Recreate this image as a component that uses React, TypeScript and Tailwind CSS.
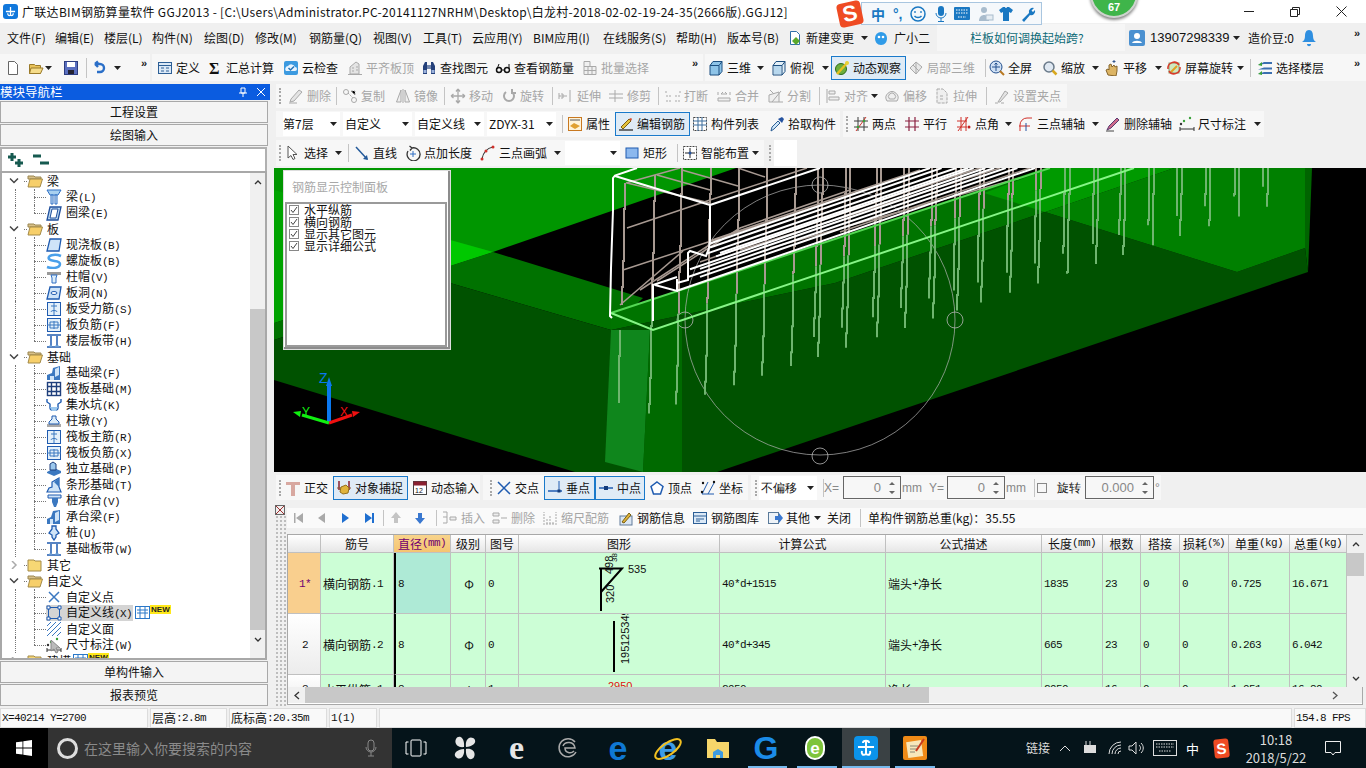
import type { ReactNode } from "react"

const GR = "#a9a9a9"
const BL = "#2f6fc4"

// 16x16 toolbar and tree icons
const icons: Record<string, ReactNode> = {
  doc: <path d="M3.5 1.5h6l3 3v10h-9z" fill="#fff" stroke="#666" />,
  newdoc: <><path d="M3.5 1.5h6l3 3v10h-9z" fill="#fff" stroke="#2f6fa8" /><path d="M9 7l4 4-4 4-4-4z" fill="#5aa82a" /></>,
  open: <><path d="M1.5 4.5h5l1 1h5v8h-11z" fill="#e8c25a" stroke="#9a7a2a" /><path d="M3 8h12l-2.5 5.5H1.5z" fill="#f5dc8a" stroke="#9a7a2a" /></>,
  save: <><rect x="1.5" y="1.5" width="13" height="13" fill="#5a6fc0" stroke="#2d3d80" /><rect x="4" y="2" width="8" height="5" fill="#fff" /><rect x="5" y="10" width="6" height="4" fill="#223" /></>,
  undo: <path d="M4 4h5a4 4 0 0 1 0 8H6M4 4l3-2.5M4 4l3 3" fill="none" stroke="#2b6fc8" strokeWidth="2.4" />,
  define: <><rect x="1.5" y="2.5" width="13" height="11" fill="#dbe9f7" stroke="#2d5f96" /><path d="M1.5 5.5h13M4 8h3M4 11h3M9 8h3M9 11h3" stroke="#2d5f96" /></>,
  sigma: <text x="2" y="14" fontSize="16" fontWeight="700" fontFamily="Liberation Serif" fill="#111">Σ</text>,
  cloud: <><rect x="1" y="1" width="14" height="14" rx="2" fill="#3c9ae0" /><path d="M3 11a3 3 0 0 1 2-5 4 4 0 0 1 7 1 2 2 0 0 1 0 4z" fill="#e8f4ff" /><path d="M5.5 8l2 2 3.5-3.5" fill="none" stroke="#2474b8" strokeWidth="1.5" /></>,
  flat: <path d="M3 14V7l6-5 3 2v10zM5 8h2M5 11h2M9 7h2M9 10h2M1 14.500h14" fill="#e4e4e4" stroke={GR} />,
  binoc: <><path d="M2 14V6l2-4h2v12zM10 14V2h2l2 4v8z" fill="#24407a" /><rect x="6" y="5" width="4" height="4" fill="#7487ad" /><rect x="2.500" y="10" width="3" height="3" fill="#9cb2dc" /><rect x="10.500" y="10" width="3" height="3" fill="#9cb2dc" /></>,
  glasses: <><circle cx="4" cy="10" r="2.500" fill="none" stroke="#111" strokeWidth="1.500" /><circle cx="12" cy="10" r="2.500" fill="none" stroke="#111" strokeWidth="1.500" /><path d="M2 9l2-5M14 9V4M6.500 10h3" stroke="#111" /></>,
  batch: <path d="M2 1.500h6v5H2zM2 6.500v8h12v-8H2zM6 6.500v8M10 6.500v8M2 10.500h12" fill="#f0f0f0" stroke={GR} />,
  cube: <><path d="M2 5.500l3-4h9v10l-3 3.500H2z" fill="#8ec4e8" stroke="#1d4f80" /><path d="M2 5.500h9v9.500M11 5.500l3-4" fill="none" stroke="#1d4f80" /></>,
  cubeTop: <><path d="M2 5.500l3-4h9v10l-3 3.500H2z" fill="#e4f0f8" stroke="#1d4f80" /><path d="M2 5.500h9v9.500M11 5.500l3-4" fill="none" stroke="#1d4f80" /><path d="M3 6h7v8H3z" fill="#b8d8ee" /></>,
  orbit: <><circle cx="7" cy="9" r="5.500" fill="#6cae3c" stroke="#2d6b1c" /><path d="M3 14L14 2" stroke="#e4c020" strokeWidth="2.500" /><circle cx="13" cy="3" r="2" fill="#e8d23c" /></>,
  local3d: <><path d="M2 8l6-6 6 5-6 7z" fill="#e8e8e8" stroke={GR} /><path d="M5 5l6 6M8 2v12" stroke={GR} /></>,
  full: <><circle cx="7" cy="7" r="6" fill="#cfe0f4" stroke="#24508e" /><path d="M7 3v8M3 7h8M7 3l-1.500 1.500M7 3l1.500 1.500" stroke="#24508e" /><path d="M11 11l4 4" stroke="#b87820" strokeWidth="2" /></>,
  zoom: <><circle cx="7" cy="7" r="5" fill="#dfe8f2" stroke="#6a7a8a" strokeWidth="1.500" /><path d="M10.500 10.500l4 4" stroke="#d8a820" strokeWidth="2.500" /></>,
  pan: <><path d="M4 15l-2-5 2-1 1 1V5l2-1 1 3 2-2 1 2 2-1v5l-1 5z" fill="#dcb464" stroke="#85642a" /><path d="M10 3V0M8.500 1.500h3" stroke="#34568c" /></>,
  rot: <><rect x="3" y="3" width="10" height="10" fill="#cfe8c0" stroke="#8aa070" /><path d="M5 12l6-6" stroke="#e0a020" strokeWidth="2" /><path d="M2 9a6 6 0 0 1 11-4M14 7a6 6 0 0 1-11 4" fill="none" stroke="#d83a2a" strokeWidth="1.500" /></>,
  floors: <><path d="M1 5l6-3h8v2H7zM1 9.500l6-2h8v2H1zM1 14l6-2h8v2H1z" fill="#3b6fb0" /><path d="M1 5l4-3v4zM1 14l4-3v4z" fill="#3aa03a" /></>,
  del: <><path d="M2 14l1-3 8-9 3 2-8 9z" fill="#e4e4e4" stroke={GR} /><path d="M1 15h8" stroke={GR} /></>,
  copy: <><circle cx="4" cy="4" r="2.500" fill="none" stroke={GR} /><circle cx="12" cy="12" r="2.500" fill="none" stroke={GR} /><path d="M6 5l5 5M9 3h4v4" stroke={GR} strokeDasharray="2 1" /></>,
  mirror: <path d="M6 2L1.500 14H6zM10 2l4.500 12H10zM8 1v14" fill="#efefef" stroke={GR} />,
  move: <path d="M8 1v14M1 8h14M8 1L6 3.500M8 1l2 2.500M8 15l-2-2.500M8 15l2-2.500M1 8l2.500-2M1 8l2.500 2M15 8l-2.500-2M15 8l-2.500 2" fill="none" stroke={GR} strokeWidth="1.300" />,
  rotcw: <path d="M5 4a5 5 0 1 0 6 0M11 1v4h4" fill="none" stroke={GR} strokeWidth="2" />,
  extend: <path d="M1 8h8M12 2v12M1 5v6M3 6h2v4H3" fill="none" stroke={GR} />,
  trim: <path d="M1 6h14M1 10h14M7 2v12" fill="none" stroke={GR} />,
  brk: <path d="M1 8h5M10 8h5M1 3v3M15 3v3M1 13h5M10 13h5" fill="none" stroke={GR} strokeDasharray="2 1" />,
  merge: <path d="M2 13h12v-3H2zM2 4v3M14 4v3M5 6h6M5 6l2-2M11 6L9 4" fill="#efefef" stroke={GR} />,
  split: <path d="M1 14h14M1 14V7l10-3v10M4 14l9-11M2 2l4 4" fill="#efefef" stroke={GR} />,
  align: <path d="M2 1v14M4 3h6v3H4zM4 9h10v3H4z" fill="#efefef" stroke={GR} />,
  offset: <path d="M3 13a6 6 0 1 1 10 0zM5.500 11a3.500 3.500 0 1 1 5 0z" fill="#efefef" stroke={GR} />,
  stretch: <path d="M3 1h6l4 4v10H3zM6 8h4M6 11h4" fill="#efefef" stroke={GR} strokeDasharray="3 1" />,
  grips: <><path d="M4 14l7-11 3 2-8 9z" fill="#e4e4e4" stroke={GR} /><path d="M1 15h3M7 15h3" stroke={GR} /></>,
  attr: <><rect x="1.500" y="1.500" width="13" height="13" fill="#fff3d8" stroke="#c87820" /><path d="M3 10l4-3 6 3-5 3z" fill="#e0a030" /><path d="M3 4h10" stroke="#555" /></>,
  edit: <><path d="M1 14h14" stroke="#444" strokeWidth="1.500" /><path d="M3 11l8-8 2 2-8 8z" fill="#e4c23c" stroke="#7a5f10" /><path d="M11 3l2-1 1 1-1 2z" fill="#d84a2a" /></>,
  list: <><rect x="1.500" y="1.500" width="13" height="13" fill="#fff" stroke="#444" strokeDasharray="2 1" /><path d="M6 1v14M10 1v14M1 5h14M1 9h14" stroke="#3d6e9e" /></>,
  pick: <><path d="M2 15l1-4 6-6 2 2-6 6z" fill="#cfe6f8" stroke="#2d5f96" /><path d="M9 3l4 4 2-4-2-2z" fill="#2553a0" /></>,
  two: <><path d="M1 5h14M1 11h14M5 1v14M11 1v14" stroke="#3d3d3d" /><path d="M3 15L13 1" stroke="#d0302a" /><circle cx="5" cy="11" r="1.300" fill="#3aa03a" /><circle cx="11" cy="5" r="1.300" fill="#3aa03a" /></>,
  para: <path d="M1 5h14M1 11h14M5 1v14M11 1v14" stroke="#8a2040" strokeWidth="1.200" />,
  angle: <><path d="M1 5h10M1 11h10M5 1v14M10 1v14" stroke="#d0302a" /><path d="M2 15L12 1" stroke="#d0302a" /><circle cx="13" cy="11" r="1.500" fill="#c02020" /></>,
  arc3: <><path d="M2 15V9a7 7 0 0 1 7-7h5M1 10h11" fill="none" stroke="#d0302a" /><path d="M8 15V7" stroke="#2553a0" /></>,
  delaxis: <><path d="M2 14l2-4 8-8 2 2-8 8z" fill="#cf6a8a" stroke="#5a3a70" /><path d="M1 15h8" stroke="#444" /></>,
  dim: <><path d="M1 11v4M15 11v4M1 13h14" stroke="#333" /><circle cx="5" cy="5" r="1.200" fill="#3aa03a" /><circle cx="11" cy="2" r="1.200" fill="#3aa03a" /><circle cx="2" cy="8" r="1.200" fill="#333" /></>,
  cursor: <path d="M3 1v12l3-2.500 2 4 2-1-2-4h4z" fill="#fff" stroke="#555" />,
  line: <><path d="M2 2l11 12" stroke="#245a9a" strokeWidth="1.500" /><path d="M14 15l-5-1 4-4z" fill="#245a9a" /></>,
  ptlen: <><path d="M3 6a6.500 6.500 0 1 0 4-3M7 3L4.500 1M7 3L5 5.500" fill="none" stroke="#333" strokeWidth="1.300" /><path d="M8 6v6M5 9h6" stroke={BL} /></>,
  arc: <><path d="M2 14C3 8 7 3 13 2" fill="none" stroke="#333" strokeWidth="1.200" /><circle cx="2" cy="14" r="1.500" fill="#d0302a" /><circle cx="6" cy="6" r="1.500" fill="#d0302a" /><circle cx="13" cy="2" r="1.500" fill="#d0302a" /></>,
  rect: <rect x="2" y="3" width="12" height="10" fill="#8cb8ee" stroke="#1f5bb0" />,
  smart: <><rect x="1.500" y="1.500" width="13" height="13" fill="#fff" stroke="#444" strokeDasharray="2 1" /><path d="M8 3v10M3 8h10" stroke="#222" /><circle cx="8" cy="8" r="1.500" fill="#2553a0" /></>,
  ortho: <path d="M1 2h14v3h-5v11H6V5H1z" fill="#d8a8a0" />,
  snap: <><path d="M3 1v9M13 1v9" stroke="#8a2030" strokeWidth="1.500" /><path d="M1 8h14" stroke="#8a5030" /><path d="M5 7l5-2 3 3-1 5-5 1-3-2z" fill="#e0b43c" stroke="#94701c" /></>,
  dyn: <><rect x="1.500" y="1.500" width="13" height="13" fill="#fff" stroke="#444" /><rect x="1.500" y="1.500" width="13" height="4" fill="#8a2030" /><text x="3" y="13" fontSize="7" fontFamily="Liberation Sans" fill="#111">12</text></>,
  cross: <path d="M2 2l12 12M14 2L2 14" stroke="#1f5bb0" strokeWidth="1.500" />,
  perp: <><path d="M1 11h14" stroke="#1f5bb0" strokeWidth="1.500" /><path d="M12 1v10" stroke="#1f5bb0" /><rect x="10.500" y="9.500" width="3" height="3" fill="#123c7c" /></>,
  mid: <><path d="M1 8h14" stroke="#1f5bb0" strokeWidth="1.500" /><rect x="6" y="6" width="4" height="4" fill="#123c7c" /></>,
  vertex: <path d="M8 2l6 4.500-2.500 7.500h-7L2 6.500z" fill="#fff" stroke="#1f5bb0" strokeWidth="1.500" />,
  coord: <><path d="M2 14h12M8 2L2 14M14 3L8 14" stroke="#1f5bb0" /><circle cx="3" cy="3" r="1.200" fill="#111" /><circle cx="14" cy="2" r="1.200" fill="#111" /><circle cx="2" cy="12" r="1.200" fill="#111" /></>,
  first: <><path d="M5 3h1.500v10H5zM14 3v10L7 8z" fill={GR} /></>,
  prev: <path d="M12 3v10L5 8z" fill={GR} />,
  next: <path d="M5 3v10l7-5z" fill="#1f6fd0" />,
  last: <path d="M3 3v10l7-5zM10 3h2v10h-2z" fill="#1f6fd0" />,
  up: <path d="M8 2l5 6h-3v5H6V8H3z" fill="#c4c4c4" />,
  down: <path d="M8 14l5-6h-3V3H6v5H3z" fill="#3a78d0" />,
  ins: <path d="M1 2h4M1 7h4M1 13h4M5 2v11M8 7h6v3H8z" fill="#eee" stroke={GR} />,
  rem: <path d="M1 3h6v3H1zM1 10h6v3H1zM9 8h6" fill="#eee" stroke={GR} />,
  scale: <path d="M2 15V2M14 15V2M4 14h8M5 14V9M8 14V6M11 14V11" stroke={GR} strokeDasharray="2 1" fill="none" />,
  info: <><rect x="2" y="6" width="12" height="9" fill="#dbe6f2" stroke="#607a9a" /><path d="M4 12l7-9 2 2-7 8z" fill="#e0b43c" stroke="#7a5f10" /></>,
  lib: <><rect x="1.500" y="2.500" width="13" height="11" fill="#dbe9f7" stroke="#2d5f96" /><path d="M1.500 6h13M4 9h8M4 11h4" stroke="#2d5f96" /></>,
  other: <><rect x="1.500" y="2.500" width="10" height="11" fill="#eef3f8" stroke="#5a7a9a" /><path d="M8 6h4V3l4 5-4 5v-3H8z" fill="#3a78d0" /></>,
  beam: <><path d="M1 1h14l-3 5H4z" fill="#a8d0f0" stroke={BL} /><path d="M5 6h2v9H5zM9 6h2v9H9z" fill="#dcecf8" stroke={BL} /></>,
  ring: <><path d="M4 2h11l-3 13H1z" fill="#bcd8f2" stroke="#1f4f9c" strokeWidth="1.300" /><path d="M6 4h6l-2 9H4z" fill="#fff" stroke="#1f4f9c" /></>,
  slab: <path d="M4 2h11l-2 12H1z" fill="#cfe4f8" stroke="#1f5bb0" strokeWidth="1.300" />,
  spiral: <path d="M15 3C8 0 1 3 3 6s11 1 11 5-7 5-13 3" fill="none" stroke="#4aa0ea" strokeWidth="2.500" />,
  capi: <><rect x="1" y="3" width="14" height="3" fill="#9a9a9a" /><path d="M5 6h6l-1 3v5H6V9z" fill="#dcecf8" stroke={BL} /></>,
  hole: <><path d="M4 2h11l-2 12H1z" fill="#cfe4f8" stroke="#1f5bb0" strokeWidth="1.300" /><ellipse cx="8" cy="8" rx="3" ry="1.500" fill="#fff" stroke="#1f5bb0" /></>,
  slabr: <><rect x="1.500" y="1.500" width="13" height="13" fill="#e4f0fa" stroke="#1f5bb0" /><path d="M8 2v12M5 5h6M5 11c0-2 6-2 6 0" fill="none" stroke="#3b78c0" /></>,
  slabn: <><rect x="1.500" y="1.500" width="13" height="13" fill="#e4f0fa" stroke="#1f5bb0" /><path d="M1 8h14M8 4v8M4 5h8v6H4z" fill="none" stroke="#3b78c0" /></>,
  band: <><path d="M1 2h14M1 14h14" stroke="#1f5bb0" strokeWidth="1.500" /><path d="M5 3v10M11 3v10" stroke="#1f5bb0" strokeWidth="1.500" /><path d="M3 13h3M9 13h4" stroke="#7ab0e0" /></>,
  fbeam: <><path d="M1 15V10l5-2 1-5 7-2v14z" fill="#3b78c0" /><path d="M4 15v-4h4v4zM9 4l4-2v8l-4 2z" fill="#cfe4f8" /></>,
  raft: <><rect x="1.500" y="1.500" width="13" height="13" fill="#fff" stroke="#1f3f7c" strokeWidth="1.400" /><path d="M1 5.500h14M1 10.500h14M5.500 1v14M10.500 1v14" stroke="#1f3f7c" strokeWidth="1.400" /></>,
  pit: <><path d="M1 2v3l3 2v4c0 3 8 3 8 0V7l3-2V2" fill="none" stroke="#1f5bb0" strokeWidth="1.400" /><path d="M4 10h8l-2 4H6z" fill="#9cc8ee" /></>,
  pier: <><rect x="1" y="11" width="14" height="3" fill="#a8a8a8" /><path d="M6 3h4v3l3 3v2H3V9l3-3z" fill="#dcecf8" stroke="#1f5bb0" /></>,
  indep: <><path d="M1 11l7-4 7 3v2l-7 3-7-3z" fill="#3b78c0" /><path d="M4 3l3-2 3 2v6H4z" fill="#9cc8ee" stroke="#1f3f7c" /></>,
  strip: <><path d="M1 15l2-4 3-1V5l7-4v9l2 5z" fill="#cfe4f8" stroke="#1f5bb0" strokeWidth="1.200" /><path d="M8 5l5-4v9z" fill="#3b78c0" /></>,
  pilecap: <><path d="M2 2h13v3H2z" fill="#cfe4f8" stroke="#1f5bb0" /><path d="M6 5h6v4l-2 5H8L6 9z" fill="#3b78c0" /></>,
  capbeam: <><path d="M1 15v-5l4-2 2-6 7-1v14z" fill="#3b78c0" /><path d="M4 15v-5h3v5zM9 4l4-2v9l-4 2z" fill="#cfe4f8" /></>,
  pile: <path d="M6 1h4v3l3 4-3 2v2l-2 3-2-3v-2L3 8l3-4z" fill="#cfe4f8" stroke="#1f5bb0" strokeWidth="1.300" />,
  cpoint: <path d="M3 3l10 10M13 3L3 13" stroke="#3b78c0" strokeWidth="1.500" />,
  cline: <><rect x="2.500" y="2.500" width="11" height="11" fill="none" stroke="#1f5bb0" /><path d="M1 1h3v3H1zM12 1h3v3h-3zM1 12h3v3H1zM12 12h3v3h-3z" fill="#fff" stroke="#1f5bb0" /></>,
  cface: <path d="M1 5l4-4M1 10l9-9M1 15L15 1M6 15l9-9M11 15l4-4" stroke="#3b78c0" />,
  folderOpen: <><path d="M1 3h6l1 1h6v2H1z" fill="#d8c088" stroke="#9a8650" /><path d="M3 6h12.500l-2.500 8H1z" fill="#f7cf6a" stroke="#a38a48" /></>,
  folder: <><path d="M1 3h6l1 1h6v10H1z" fill="#f7d774" stroke="#a38a48" /></>,
}

function Ic({ n, className = "" }: { n: string; className?: string }) {
  return (
    <svg viewBox="0 0 16 16" width="16" height="16" className={`shrink-0 ${className}`}>
      {icons[n]}
    </svg>
  )
}

function Caret({ className = "" }: { className?: string }) {
  return (
    <div className={`flex shrink-0 items-center ${className}`}>
      <svg viewBox="0 0 7 4" width="7" height="4">
        <path d="M0 0h7L3.500 4z" fill="#222" />
      </svg>
    </div>
  )
}

function T({ w, i, t, gray, on }: { w: string; i: string; t: string; gray?: boolean; on?: boolean }) {
  return (
    <div
      className={`flex h-[24px] shrink-0 items-center whitespace-nowrap ${w} ${
        on ? "border border-[#1979ca] bg-[#dfebf6] pl-[2px]" : ""
      } ${gray ? "text-[#a6a6a6]" : "text-[#111]"}`}
    >
      <Ic n={i} />
      <span className="ml-[3px]">{t}</span>
    </div>
  )
}

function Sep({ w }: { w: string }) {
  return (
    <div className={`flex h-[18px] shrink-0 ${w}`}>
      <div className="h-full w-px bg-[#c4c4c4]" />
    </div>
  )
}

function Grip({ className = "" }: { className?: string }) {
  return <div className={`h-[16px] w-[3px] shrink-0 border-l-2 border-dotted border-[#a8a8a8] ${className}`} />
}

function Combo({ w, t, className = "" }: { w: string; t?: string; className?: string }) {
  return (
    <div className={`flex h-[24px] shrink-0 items-center justify-between bg-white pr-[3px] text-[#111] ${w} ${className}`}>
      <span>{t}</span>
      <Caret />
    </div>
  )
}

function Chevrons({ className = "" }: { className?: string }) {
  return <span className={`shrink-0 font-['Liberation_Sans'] text-[11px] font-bold text-[#222] ${className}`}>»</span>
}

// latin in the bitmap font is half an em wide
function Sim({ t }: { t: string }) {
  return (
    <>
      {t.split(/([\x00-\x7f]+)/).map((s, i) =>
        /^[\x00-\x7f]+$/.test(s) ? (
          <span key={i} className="font-['Liberation_Mono'] text-[11px] tracking-[-0.6px]">
            {s}
          </span>
        ) : (
          s
        )
      )}
    </>
  )
}

const menu = [
  ["文件(F)", "w-[48px]"],
  ["编辑(E)", "w-[49px]"],
  ["楼层(L)", "w-[48px]"],
  ["构件(N)", "w-[52px]"],
  ["绘图(D)", "w-[51px]"],
  ["修改(M)", "w-[54px]"],
  ["钢筋量(Q)", "w-[64px]"],
  ["视图(V)", "w-[50px]"],
  ["工具(T)", "w-[49px]"],
  ["云应用(Y)", "w-[61px]"],
  ["BIM应用(I)", "w-[70px]"],
  ["在线服务(S)", "w-[73px]"],
  ["帮助(H)", "w-[51px]"],
  ["版本号(B)", "w-[60px]"],
]

type Node = { t: string; i?: string; kind?: "open" | "closed"; last?: boolean; sel?: boolean; isNew?: boolean }

const tree: Node[] = [
  { t: "梁", kind: "open" },
  { t: "梁(L)", i: "beam" },
  { t: "圈梁(E)", i: "ring", last: true },
  { t: "板", kind: "open" },
  { t: "现浇板(B)", i: "slab" },
  { t: "螺旋板(B)", i: "spiral" },
  { t: "柱帽(V)", i: "capi" },
  { t: "板洞(N)", i: "hole" },
  { t: "板受力筋(S)", i: "slabr" },
  { t: "板负筋(F)", i: "slabn" },
  { t: "楼层板带(H)", i: "band", last: true },
  { t: "基础", kind: "open" },
  { t: "基础梁(F)", i: "fbeam" },
  { t: "筏板基础(M)", i: "raft" },
  { t: "集水坑(K)", i: "pit" },
  { t: "柱墩(Y)", i: "pier" },
  { t: "筏板主筋(R)", i: "slabr" },
  { t: "筏板负筋(X)", i: "slabn" },
  { t: "独立基础(P)", i: "indep" },
  { t: "条形基础(T)", i: "strip" },
  { t: "桩承台(V)", i: "pilecap" },
  { t: "承台梁(F)", i: "capbeam" },
  { t: "桩(U)", i: "pile" },
  { t: "基础板带(W)", i: "band", last: true },
  { t: "其它", kind: "closed" },
  { t: "自定义", kind: "open" },
  { t: "自定义点", i: "cpoint" },
  { t: "自定义线(X)", i: "cline", sel: true, isNew: true },
  { t: "自定义面", i: "cface" },
  { t: "尺寸标注(W)", i: "dim", last: true },
  { t: "建模", kind: "closed", isNew: true },
]

function TreeRow({ n }: { n: Node }) {
  if (n.kind) {
    return (
      <div className="flex h-4 shrink-0 items-center">
        <div className="flex w-[22px] shrink-0 justify-start pl-[7px]">
          <svg viewBox="0 0 10 8" width="10" height="8">
            {n.kind === "open" ? (
              <path d="M1 1.500l4 4 4-4" fill="none" stroke="#444" strokeWidth="1.500" />
            ) : (
              <path d="M3 0l4 4-4 4" fill="none" stroke="#aaa" strokeWidth="1.500" />
            )}
          </svg>
        </div>
        <div className="w-[3px] shrink-0 border-t border-dotted border-[#777]" />
        <Ic n={n.kind === "open" ? "folderOpen" : "folder"} />
        <span className="ml-[4px]">
          <Sim t={n.t} />
        </span>
        {n.isNew && <NewTag />}
      </div>
    )
  }
  return (
    <div className="flex h-4 shrink-0 items-center">
      <div className="ml-[13px] h-full w-[19px] shrink-0 border-l border-dotted border-[#777]" />
      <div className={`w-[12px] shrink-0 self-start border-l border-dotted border-[#777] ${n.last ? "h-1/2" : "h-full"}`} />
      <div className="-ml-[12px] w-[12px] shrink-0 border-t border-dotted border-[#777]" />
      <div className={`flex h-full items-center ${n.sel ? "bg-[#d4d4d4]" : ""}`}>
        <Ic n={n.i!} />
        <span className="ml-[4px] pr-[1px] whitespace-nowrap">
          <Sim t={n.t} />
        </span>
      </div>
      {n.isNew && <NewTag />}
    </div>
  )
}

function NewTag() {
  return (
    <div className="ml-[2px] flex self-start">
      <svg viewBox="0 0 15 14" width="15" height="14" className="shrink-0">
        <rect x="0.500" y="1.500" width="14" height="12" fill="#fff" stroke="#2a78c8" />
        <path d="M5 2v11M10 2v11M2 5h11M2 8h11" stroke="#2a78c8" />
      </svg>
      <span className="h-[9px] bg-[#ffe81a] px-[1px] font-['Liberation_Sans'] text-[8px] leading-[9px] font-bold text-[#222]">NEW</span>
    </div>
  )
}

function SideBtn({ t }: { t: string }) {
  return (
    <div className="flex h-[22px] w-[268px] shrink-0 items-center justify-center border border-[#a8a8a8] bg-[#f4f4f4] text-[#111]">
      {t}
    </div>
  )
}

function Sidebar() {
  return (
    <div className="flex w-[274px] shrink-0 flex-col text-[12px]">
      <div className="flex h-[16px] w-[270px] shrink-0 items-center bg-[#0b5ce0] text-white">
        <span className="flex-1 text-[12.500px]">模块导航栏</span>
        <svg viewBox="0 0 10 10" width="10" height="10" className="mr-[8px]">
          <path d="M3 1h4v5H3zM1 6h8M5 6v4" fill="none" stroke="#fff" />
        </svg>
        <svg viewBox="0 0 10 10" width="10" height="10" className="mr-[4px]">
          <path d="M1 1l8 8M9 1L1 9" stroke="#fff" />
        </svg>
      </div>
      <div className="mt-px">
        <SideBtn t="工程设置" />
      </div>
      <div className="mt-px">
        <SideBtn t="绘图输入" />
      </div>
      <div className="mt-px flex h-[24px] w-[267px] shrink-0 items-center gap-[7px] border-x-2 border-t-2 border-[#b0b0b0] bg-white pl-[5px]">
        <svg viewBox="0 0 18 16" width="18" height="16">
          <path d="M5 1v8M1 5h8M12 7v8M8 11h8" stroke="#165a50" strokeWidth="3" />
        </svg>
        <svg viewBox="0 0 18 16" width="18" height="16">
          <path d="M1 4h8M8 11h9" stroke="#165a50" strokeWidth="3" />
        </svg>
      </div>
      <div className="flex h-[489px] w-[267px] shrink-0 overflow-hidden border-2 border-[#a8a8a8] bg-white">
        <div className="relative flex-1 overflow-hidden text-[#111]">
          <div className="flex flex-col">
            {tree.map((n, i) => (
              <TreeRow key={i} n={n} />
            ))}
          </div>
          <svg viewBox="0 0 12 14" width="12" height="14" className="absolute top-[467px] left-[48px]">
            <path d="M1 0v11l3-2 2 4 2-1-2-4h4z" fill="#bbb" stroke="#888" />
          </svg>
        </div>
        <div className="flex w-[15px] shrink-0 flex-col bg-[#f0f0f0]">
          <div className="flex h-[18px] items-center justify-center">
            <svg viewBox="0 0 8 5" width="8" height="5">
              <path d="M1 4l3-3 3 3" fill="none" stroke="#333" strokeWidth="1.300" />
            </svg>
          </div>
          <div className="mt-[118px] h-[321px] bg-[#c8c8c8]" />
          <div className="flex h-[18px] items-center justify-center">
            <svg viewBox="0 0 8 5" width="8" height="5">
              <path d="M1 1l3 3 3-3" fill="none" stroke="#333" strokeWidth="1.300" />
            </svg>
          </div>
        </div>
      </div>
      <div className="mt-px">
        <SideBtn t="单构件输入" />
      </div>
      <div className="mt-px">
        <SideBtn t="报表预览" />
      </div>
    </div>
  )
}

const lineTwo = (x: number) => 273 - (x - 835) * 0.345

// rods lean slightly and jog every few pixels, as the rasterised 3D lines do
function rodPath(xEnd: number, yEnd: number, y1: number, y2: number) {
  const xAt = (y: number) => xEnd + Math.round((yEnd - y) / 40)
  let d = `M${xAt(y1)} ${y1}`
  for (let y = y1 + 26; y < y2; y += 26) {
    d += `V${y}H${xAt(y)}`
  }
  return `${d}V${y2}`
}

const frontXs = [649, 676, 705, 734, 762, 791, 818, 846, 877, 905, 933, 957, 981, 1010, 1038, 1067, 1096, 1123, 1152, 1180, 1209, 1238, 1267]
const rods: { d: string; c: string }[] = []
function addRod(x: number, end: number, top: number) {
  if (x >= 1040) {
    rods.push({ d: rodPath(x, end, 168, end), c: "#6fb56f" })
    return
  }
  const split = x < 660 ? 300 : lineTwo(x) - 14
  rods.push({ d: rodPath(x, end, top, split), c: "#a89a92" })
  rods.push({ d: rodPath(x, end, split, end), c: "#6fb56f" })
}
frontXs.forEach((x) => addRod(x, 347 - (x - 848) * 0.3345, x < 660 ? 175 : 168))
frontXs.filter((x) => x > 800).forEach((x) => addRod(x - 4, 327 - (x - 848) * 0.3345, 168))
rods.push({ d: rodPath(618, 403, 330, 403), c: "#6fb56f" })
rods.push({ d: rodPath(622, 305, 183, 305), c: "#a89a92" })

const bundle = [
  [710, 192],
  [710, 196],
  [706, 201],
  [720, 205],
  [716, 207],
  [690, 211],
  [700, 214],
  [688, 218],
  [700, 222],
  [677, 228],
]

const whiteLines = [
  "M637 168L615 175.500L613 178V210L611 268L610 316L612 318",
  "M615 176L710 205V240L709 248L706 256L690 251L688 253V280L677 283",
  "M710 205L820 168",
  "M653 321V285L677 277M655 285L677 291V279",
  ...bundle.map(([x, y860]) => `M${x} ${y860 + (860 - x) * 0.343}L${860 + (y860 - 168) / 0.343} 168`),
]

const grayLines = [
  "M627 228L710 200L807 168",
  "M623 270L760 225L930 168",
  "M626 183L680 168",
  "M627 183L710 203",
  "M657 175L710 190",
  "M682 170L738 186",
  "M738 168L765 177",
  "M620 305L683 251",
  "M657 281L740 228L850 190",
  "M700 262L860 206",
  "M712 240L830 200L920 170",
  "M720 255L900 194L980 168",
  "M740 250L1000 168",
  "M770 248L1020 178",
  "M840 232L1030 168",
  "M640 290L720 238",
]

const octagons = [
  [685, 320],
  [955, 320],
  [820, 456],
  [820, 185],
]

function Canvas() {
  return (
    <div className="relative h-[304px] shrink-0 overflow-hidden bg-black">
      <svg viewBox="274 168 1092 304" width="1092" height="304" className="block">
        <polygon points="274,168 736,168 493,252 274,323" fill="#009600" />
        <polygon points="274,190 493,252 274,323" fill="#00a400" />
        <polygon points="450,240 493,252 450,266" fill="#00c800" />
        <polygon points="274,323 493,252 643,298 611,330 450,283 274,340" fill="#007200" />
        <polygon points="274,340 450,283 611,330 835,283 1045,212 1237,272 1305,248 1308,272 717,472 575,472 274,380" fill="#005200" />
        <polygon points="611,313 1045,168 1174,168 1045,212 835,283 611,330" fill="#007400" />
        <polygon points="984,193 1052,168 1174,168 1045,212" fill="#009a00" />
        <polygon points="1045,212 1174,168 1310,168 1305,248 1237,272" fill="#008000" />
        <polygon points="1305,168 1312,168 1308,272 1305,248" fill="#006400" />
        <polygon points="611,330 605,462 643,472 650,330" fill="#0f861c" />
        <polygon points="650,330 643,472 682,472 682,322" fill="#006a00" />
        <circle cx="820" cy="320" r="135" fill="none" stroke="#b4b4b4" strokeOpacity="0.7" />
        {octagons.map(([x, y]) => (
          <circle key={x + y} cx={x} cy={y} r="8" fill="none" stroke="#b4b4b4" strokeOpacity="0.8" />
        ))}
        {grayLines.map((d) => (
          <path key={d} d={d} fill="none" stroke="#a89a92" strokeWidth="1.500" />
        ))}
        {rods.map((r, i) => (
          <path key={i} d={r.d} fill="none" stroke={r.c} strokeWidth="2" />
        ))}
        <path d="M611 313L1050 168" stroke="#55d855" strokeWidth="2" />
        <path d="M611 313L653 330L1134 168" fill="none" stroke="#86f586" strokeWidth="2" />
        {whiteLines.map((d) => (
          <path key={d} d={d} fill="none" stroke="#fff" strokeWidth="2" />
        ))}
        <path d="M329 423V383" stroke="#0a78f0" strokeWidth="4" />
        <path d="M329 377l-3 9h6z" fill="#0a78f0" />
        <path d="M329 423l23-8" stroke="#f01010" strokeWidth="3" />
        <path d="M360 412l-8-1 1 6z" fill="#f01010" />
        <path d="M329 423l-27-8" stroke="#10f010" strokeWidth="3" />
        <path d="M293 412l8-1-1 6z" fill="#10f010" />
        <text x="319" y="383" fontSize="14" fontFamily="Liberation Sans" fill="#0a78f0">Z</text>
        <text x="340" y="416" fontSize="12" fontFamily="Liberation Sans" fill="#f01010">X</text>
        <text x="302" y="416" fontSize="12" fontFamily="Liberation Sans" fill="#10f010">Y</text>
      </svg>
      <div className="absolute top-[3px] left-[10px] flex h-[178px] w-[166px] flex-col border-r-2 border-b-2 border-[#8c8c8c] bg-white shadow-[0_0_0_1px_#ddd]">
        <div className="flex h-[31px] shrink-0 items-center pl-[8px] text-[#a8a8a8]">钢筋显示控制面板</div>
        <div className="mx-px flex flex-1 flex-col border-2 border-[#9a9a9a] bg-white text-[#111]">
          {["水平纵筋", "横向钢筋", "显示其它图元", "显示详细公式"].map((t) => (
            <div key={t} className="flex h-[12px] items-center pl-[2px]">
              <div className="flex h-[10px] w-[10px] shrink-0 items-center justify-center border border-[#888] bg-white">
                <svg viewBox="0 0 8 8" width="8" height="8">
                  <path d="M1 4l2 2.500L7 1" fill="none" stroke="#444" />
                </svg>
              </div>
              <span className="ml-[5px]">{t}</span>
            </div>
          ))}
        </div>
      </div>
    </div>
  )
}

function Spin({ v, w }: { v: string; w: string }) {
  return (
    <div className={`flex h-[23px] shrink-0 items-center justify-end border border-[#666] pr-[4px] font-['Liberation_Sans'] text-[13px] text-[#888] ${w}`}>
      <span>{v}</span>
      <svg viewBox="0 0 8 16" width="8" height="16" className="ml-[7px]">
        <path d="M1 5l3-3 3 3zM1 11l3 3 3-3z" fill="#666" />
      </svg>
    </div>
  )
}

const COLS = "grid grid-cols-[33px_73px_57px_35px_33px_201px_166px_156px_61px_38px_39px_49px_61px_57px]"
const heads = ["", "筋号", "直径(mm)", "级别", "图号", "图形", "计算公式", "公式描述", "长度(mm)", "根数", "搭接", "损耗(%)", "单重(kg)", "总重(kg)"]

function Cell({ t, className = "" }: { t: string; className?: string }) {
  return (
    <div className={`flex items-center overflow-hidden border-r border-b border-[#c0c0c0] pt-[2px] pl-[2px] whitespace-nowrap ${className}`}>
      <Sim t={t} />
    </div>
  )
}

function DataRow({ h, no, noCls, cells, dia, fig }: { h: string; no: string; noCls: string; cells: string[]; dia: string; fig: ReactNode }) {
  return (
    <div className={`${COLS} ${h}`}>
      <Cell t={no} className={`justify-center ${noCls}`} />
      <Cell t={cells[0]} />
      <Cell t={cells[1]} className={`border-l-2 border-l-black ${dia}`} />
      <Cell t="Φ" className="justify-center pl-0" />
      <Cell t={cells[2]} />
      <div className="overflow-hidden border-r border-b border-[#c0c0c0]">{fig}</div>
      {cells.slice(3).map((c, i) => (
        <Cell key={i} t={c} />
      ))}
    </div>
  )
}

function RebarTable() {
  return (
    <div className="mr-[3px] flex h-[171px] flex-col border border-[#a8a8a8] bg-white text-[12px] text-[#111]">
      <div className="flex h-[152px] shrink-0">
        <div className="w-[1059px] shrink-0 overflow-hidden">
          <div className={`${COLS} h-[18px]`}>
            {heads.map((h, i) => (
              <div
                key={i}
                className={`flex items-center justify-center overflow-hidden border-r border-b border-[#c0c0c0] whitespace-nowrap ${
                  i === 2 ? "bg-[linear-gradient(#f8d48c,#f5c470)] text-[#700070]" : "bg-[linear-gradient(#fff,#e6e6e6)]"
                }`}
              >
                <Sim t={h} />
              </div>
            ))}
          </div>
          <div className="bg-[#ccfed6]">
            <DataRow
              h="h-[61px]"
              no="1*"
              noCls="bg-[#f9cf8e] text-[#700070]"
              dia="bg-[#aeead6]"
              cells={["横向钢筋.1", "8", "0", "40*d+1515", "端头+净长", "1835", "23", "0", "0", "0.725", "16.671"]}
              fig={
                <svg viewBox="518 553 201 61" width="201" height="61" className="block">
                  <path d="M600 611V568M598 568.500H621L600 592" fill="none" stroke="#000" strokeWidth="2" />
                  <text x="627" y="573" fontSize="11" fontFamily="Liberation Sans" fill="#111">535</text>
                  <text transform="translate(613 603) rotate(-90)" fontSize="11" fontFamily="Liberation Sans" fill="#111">320</text>
                  <text transform="translate(612 574) rotate(-90)" fontSize="11" fontFamily="Liberation Sans" fill="#111">498</text>
                  <text transform="translate(616 562) rotate(-90)" fontSize="8" fontFamily="Liberation Sans" fill="#111">38</text>
                </svg>
              }
            />
            <DataRow
              h="h-[61px]"
              no="2"
              noCls="bg-[linear-gradient(#fff,#ececec)]"
              dia=""
              cells={["横向钢筋.2", "8", "0", "40*d+345", "端头+净长", "665", "23", "0", "0", "0.263", "6.042"]}
              fig={
                <svg viewBox="518 614 201 61" width="201" height="61" className="block">
                  <path d="M613 621V672" stroke="#000" strokeWidth="2" />
                  <text transform="translate(628 664) rotate(-90)" fontSize="11" fontFamily="Liberation Sans" fill="#111">195</text>
                  <text transform="translate(628 646) rotate(-90)" fontSize="11" fontFamily="Liberation Sans" fill="#111">125349</text>
                </svg>
              }
            />
            <DataRow
              h="h-[28px]"
              no="3"
              noCls="bg-[linear-gradient(#fff,#ececec)]"
              dia=""
              cells={["水平纵筋.1", "8", "1", "2950", "净长", "2950", "16", "0", "0", "1.051", "16.80"]}
              fig={<div className="pt-[6px] pl-[89px] font-['Liberation_Sans'] text-[11px] leading-none text-[#e01010]">2950</div>}
            />
          </div>
        </div>
        <div className="flex w-[17px] shrink-0 flex-col items-center bg-[#f0f0f0]">
          <div className="flex h-[18px] items-center">
            <svg viewBox="0 0 8 5" width="8" height="5">
              <path d="M1 4l3-3 3 3" fill="none" stroke="#333" strokeWidth="1.300" />
            </svg>
          </div>
          <div className="h-[23px] w-full bg-[#c8c8c8]" />
          <div className="mt-auto flex h-[18px] items-center">
            <svg viewBox="0 0 8 5" width="8" height="5">
              <path d="M1 1l3 3 3-3" fill="none" stroke="#333" strokeWidth="1.300" />
            </svg>
          </div>
        </div>
      </div>
      <div className="flex h-[16px] shrink-0 items-center bg-[#f0f0f0]">
        <div className="flex w-[17px] shrink-0 justify-center">
          <svg viewBox="0 0 6 9" width="6" height="9">
            <path d="M5 1L1 4.500 5 8" fill="none" stroke="#333" strokeWidth="1.300" />
          </svg>
        </div>
        <div className="h-full w-[624px] bg-[#c8c8c8]" />
        <div className="flex flex-1 justify-end pr-[24px]">
          <svg viewBox="0 0 6 9" width="6" height="9">
            <path d="M1 1l4 3.500L1 8" fill="none" stroke="#555" strokeWidth="1.300" />
          </svg>
        </div>
      </div>
    </div>
  )
}

function Workspace() {
  return (
    <div className="flex min-w-0 flex-1 flex-col text-[12px]">
      {/* edit toolbar */}
      <div className="ml-[2px] flex h-[24px] w-[791px] shrink-0 items-center bg-[#f7f7f7] pl-[3px]">
        <Grip className="mr-[6px]" />
        <T gray w="w-[48px]" i="del" t="删除" />
        <Sep w="w-[6px]" />
        <T gray w="w-[53px]" i="copy" t="复制" />
        <T gray w="w-[49px]" i="mirror" t="镜像" />
        <Sep w="w-[6px]" />
        <T gray w="w-[51px]" i="move" t="移动" />
        <T gray w="w-[51px]" i="rotcw" t="旋转" />
        <Sep w="w-[6px]" />
        <T gray w="w-[50px]" i="extend" t="延伸" />
        <T gray w="w-[50px]" i="trim" t="修剪" />
        <Sep w="w-[7px]" />
        <T gray w="w-[51px]" i="brk" t="打断" />
        <T gray w="w-[52px]" i="merge" t="合并" />
        <T gray w="w-[51px]" i="split" t="分割" />
        <Sep w="w-[6px]" />
        <T gray w="w-[46px]" i="align" t="对齐" />
        <Caret className="w-[13px]" />
        <T gray w="w-[50px]" i="offset" t="偏移" />
        <T gray w="w-[52px]" i="stretch" t="拉伸" />
        <Sep w="w-[8px]" />
        <T gray w="w-[70px]" i="grips" t="设置夹点" />
      </div>

      <div className="mt-[3px] flex h-[26px] shrink-0 items-center">
        <div className="ml-[2px] flex h-full w-[564px] shrink-0 items-center bg-[#f7f7f7] pl-[7px]">
          <Combo w="w-[57px]" t="第7层" />
          <Combo w="w-[69px]" t="自定义" className="ml-[3px] pl-[2px]" />
          <Combo w="w-[69px]" t="自定义线" className="ml-[3px] pl-[2px]" />
          <Combo w="w-[69px]" t="ZDYX-31" className="ml-[3px] pl-[2px]" />
          <div className="w-[6px] shrink-0" />
          <Sep w="w-[5px]" />
          <T w="w-[48px]" i="attr" t="属性" />
          <T on w="w-[75px]" i="edit" t="编辑钢筋" />
          <div className="w-[2px] shrink-0" />
          <T w="w-[77px]" i="list" t="构件列表" />
          <T w="w-[71px]" i="pick" t="拾取构件" />
        </div>
        <div className="ml-[3px] flex h-full w-[421px] shrink-0 items-center bg-[#f7f7f7] pl-[3px]">
          <Grip className="mr-[4px]" />
          <T w="w-[51px]" i="two" t="两点" />
          <T w="w-[52px]" i="para" t="平行" />
          <T w="w-[49px]" i="angle" t="点角" />
          <Caret className="w-[13px]" />
          <T w="w-[74px]" i="arc3" t="三点辅轴" />
          <Caret className="w-[13px]" />
          <T w="w-[74px]" i="delaxis" t="删除辅轴" />
          <T w="w-[75px]" i="dim" t="尺寸标注" />
          <Caret className="w-[10px]" />
        </div>
      </div>

      <div className="mt-[3px] flex h-[26px] shrink-0 items-center">
        <div className="ml-[2px] flex h-full w-[488px] shrink-0 items-center bg-[#f7f7f7] pl-[3px]">
          <Grip className="mr-[3px]" />
          <T w="w-[50px]" i="cursor" t="选择" />
          <Caret className="w-[13px]" />
          <Sep w="w-[6px]" />
          <T w="w-[51px]" i="line" t="直线" />
          <T w="w-[75px]" i="ptlen" t="点加长度" />
          <T w="w-[74px]" i="arc" t="三点画弧" />
          <Caret className="w-[11px]" />
          <Combo w="w-[55px]" />
          <div className="w-[4px] shrink-0" />
          <T w="w-[53px]" i="rect" t="矩形" />
          <Sep w="w-[5px]" />
          <T w="w-[70px]" i="smart" t="智能布置" />
          <Caret className="w-[7px]" />
        </div>
        <div className="ml-[5px] flex h-full items-center">
          <Grip />
          <div className="ml-[2px] h-[26px] w-[23px] bg-white" />
        </div>
      </div>

      <div className="mt-[2px]">
        <Canvas />
      </div>

      {/* snap toolbar */}
      <div className="mt-[3px] flex h-[25px] shrink-0 items-center">
        <div className="ml-[2px] flex h-full w-[204px] shrink-0 items-center bg-[#f7f7f7] pl-[3px]">
          <Grip className="mr-[3px]" />
          <T w="w-[48px]" i="ortho" t="正交" />
          <T on w="w-[75px]" i="snap" t="对象捕捉" />
          <div className="w-[4px] shrink-0" />
          <T w="w-[68px]" i="dyn" t="动态输入" />
        </div>
        <div className="ml-[3px] flex h-full w-[265px] shrink-0 items-center bg-[#f7f7f7] pl-[7px]">
          <Grip className="mr-[3px]" />
          <T w="w-[48px]" i="cross" t="交点" />
          <T on w="w-[51px]" i="perp" t="垂点" />
          <T on w="w-[50px]" i="mid" t="中点" />
          <div className="w-[4px] shrink-0" />
          <T w="w-[51px]" i="vertex" t="顶点" />
          <T w="w-[48px]" i="coord" t="坐标" />
        </div>
        <div className="ml-[3px] flex h-full w-[410px] shrink-0 items-center bg-[#f7f7f7] pl-[4px] font-['Liberation_Sans'] text-[#888]">
          <Grip />
          <Combo w="w-[58px]" t="不偏移" className="ml-px pl-[2px]" />
          <div className="w-[6px] shrink-0" />
          <Sep w="w-[1px]" />
          <span className="w-[19px] shrink-0">X=</span>
          <Spin v="0" w="w-[58px]" />
          <span className="ml-[1px] w-[27px] shrink-0">mm</span>
          <span className="w-[18px] shrink-0">Y=</span>
          <Spin v="0" w="w-[58px]" />
          <span className="ml-[1px] w-[28px] shrink-0">mm</span>
          <Sep w="w-[3px]" />
          <div className="h-[10px] w-[10px] shrink-0 border border-[#888]" />
          <span className="ml-[10px] w-[28px] shrink-0 text-[#111]">旋转</span>
          <Spin v="0.000" w="w-[69px]" />
          <span className="ml-[1px]">°</span>
        </div>
      </div>

      {/* rebar panel */}
      <div className="mt-[5px] flex h-[201px] shrink-0 bg-[#f0f0f0]">
        <div className="ml-px flex w-[12px] shrink-0 flex-col">
          <svg viewBox="0 0 10 10" width="10" height="10" className="shrink-0">
            <rect x="0.500" y="0.500" width="9" height="9" fill="#eee" stroke="#666" />
            <path d="M1 1l8 8M9 1L1 9" stroke="#a03030" />
          </svg>
          <div className="flex-1 bg-[radial-gradient(#bdbdbd_1px,transparent_1px)] bg-[length:4px_4px]" />
        </div>
        <div className="flex min-w-0 flex-1 flex-col">
          <div className="mt-[3px] flex h-[20px] shrink-0 items-center bg-[#fafafa] pl-[2px]">
            <Ic n="first" />
            <Ic n="prev" className="ml-[8px]" />
            <Ic n="next" className="ml-[8px]" />
            <Ic n="last" className="ml-[9px]" />
            <div className="ml-[5px] h-4 w-px bg-[#c4c4c4]" />
            <Ic n="up" className="ml-[4px]" />
            <Ic n="down" className="ml-[8px]" />
            <div className="ml-[8px] h-4 w-px bg-[#c4c4c4]" />
            <div className="w-[5px] shrink-0" />
            <T gray w="w-[50px]" i="ins" t="插入" />
            <T gray w="w-[50px]" i="rem" t="删除" />
            <T gray w="w-[76px]" i="scale" t="缩尺配筋" />
            <T w="w-[74px]" i="info" t="钢筋信息" />
            <T w="w-[75px]" i="lib" t="钢筋图库" />
            <T w="w-[47px]" i="other" t="其他" />
            <Caret className="w-[13px]" />
            <span className="w-[33px] shrink-0 text-[#111]">关闭</span>
            <Sep w="w-[8px]" />
            <span className="whitespace-nowrap text-[#111]">单构件钢筋总重(kg)：35.55</span>
          </div>
          <div className="mt-[6px]">
            <RebarTable />
          </div>
        </div>
      </div>
    </div>
  )
}

function StatusBar() {
  const cell = "flex h-full shrink-0 items-center border border-[#dcdcdc] bg-[#f9f9f9] pl-[1px] text-[#111]"
  return (
    <div className="flex h-[20px] shrink-0 gap-[2px] bg-[#f0f0f0] text-[12px]">
      <div className={`${cell} w-[148px]`}>
        <Sim t="X=40214 Y=2700" />
      </div>
      <div className={`${cell} w-[77px]`}>
        <Sim t="层高:2.8m" />
      </div>
      <div className={`${cell} w-[98px]`}>
        <Sim t="底标高:20.35m" />
      </div>
      <div className={`${cell} w-[48px]`}>
        <Sim t="1(1)" />
      </div>
      <div className={`${cell} w-[913px]`} />
      <div className={`${cell} flex-1`}>
        <Sim t="154.8 FPS" />
      </div>
    </div>
  )
}

function Taskbar() {
  return (
    <div className="flex h-[40px] shrink-0 items-center bg-[#05141a] text-white">
      <div className="flex h-full w-[48px] shrink-0 items-center justify-center bg-black">
        <svg viewBox="0 0 16 16" width="16" height="16">
          <path d="M0 2.300l6.500-.9v6.200H0zM7.300 1.300L16 0v7.600H7.300zM0 8.400h6.500v6.200L0 13.700zM7.300 8.400H16V16l-8.700-1.300z" fill="#fff" />
        </svg>
      </div>
      <div className="flex h-full w-[344px] shrink-0 items-center bg-[#333] pl-[9px] text-[14px] text-[#8a8a8a]">
        <div className="h-[21px] w-[21px] shrink-0 rounded-full border-[3px] border-[#ddd]" />
        <span className="ml-[6px] flex-1">在这里输入你要搜索的内容</span>
        <svg viewBox="0 0 12 18" width="12" height="18" className="mr-[15px]">
          <rect x="3" y="1" width="6" height="11" rx="3" fill="none" stroke="#888" />
          <path d="M1 8a5 5 0 0 0 10 0M6 13v4M3 17h6" fill="none" stroke="#888" />
        </svg>
      </div>
      {/* pinned apps */}
      <div className="flex h-full w-[450px] shrink-0 items-center">
        <div className="flex w-[48px] justify-center">
          <svg viewBox="0 0 22 18" width="22" height="18">
            <rect x="6" y="1" width="10" height="16" rx="1" fill="none" stroke="#fff" />
            <path d="M3.500 3H1v12h2.500M18.500 3H21v12h-2.500" fill="none" stroke="#fff" />
          </svg>
        </div>
        <div className="flex w-[50px] justify-center">
          <svg viewBox="0 0 22 24" width="22" height="24">
            <path d="M10 11C3 12 0 7 2 3s9-3 8 8zM12 11c-1-7 3-11 7-9s3 8-7 9zM10 13c1 7-3 11-7 9s-3-8 7-9zM12 13c7-1 10 4 8 8s-9 3-8-8z" fill="#e6e6e6" />
          </svg>
        </div>
        <div className="flex w-[53px] justify-center font-['Liberation_Serif'] text-[34px] leading-none font-bold text-[#e6e6e6]">e</div>
        <div className="flex w-[50px] justify-center">
          <svg viewBox="0 0 22 22" width="22" height="22">
            <path d="M18 5a9 9 0 1 0 1 10M6 9c2-5 11-5 12 2H8c0 5 6 6 9 3" fill="none" stroke="#aaa" strokeWidth="1.500" />
          </svg>
        </div>
        <div className="flex w-[50px] justify-center font-['Liberation_Sans'] text-[34px] leading-none font-bold text-[#0f78d4]">e</div>
        <div className="relative flex w-[50px] justify-center font-['Liberation_Sans'] text-[34px] leading-none font-bold text-[#3b9be8]">
          e
          <svg viewBox="0 0 30 30" width="30" height="30" className="absolute top-[3px] left-[10px]">
            <ellipse cx="15" cy="15" rx="15" ry="6" transform="rotate(-35 15 15)" fill="none" stroke="#f2c021" strokeWidth="2" />
          </svg>
        </div>
        <div className="flex w-[49px] justify-center">
          <svg viewBox="0 0 24 24" width="24" height="24">
            <path d="M1 3h8l2 3h12v16H1z" fill="#f6d66a" />
            <path d="M7 22v-6l5-3 5 3v6h-3v-3h-4v3z" fill="#3f9be0" />
          </svg>
        </div>
        <div className="flex w-[48px] justify-center font-['Liberation_Sans'] text-[32px] leading-none font-bold text-[#1b8ce8]">G</div>
        <div className="flex w-[50px] justify-center">
          <div className="flex h-[24px] w-[20px] items-center justify-center rounded-full border-2 border-[#fff] bg-[#7ec43c] font-['Liberation_Sans'] text-[17px] leading-none font-bold text-white">e</div>
        </div>
      </div>
      <div className="flex h-full w-[48px] shrink-0 items-center justify-center bg-[#3a4144]">
        <svg viewBox="0 0 24 24" width="24" height="24">
          <rect width="24" height="24" rx="4" fill="#0b93ea" />
          <path d="M4 11h16M12 4v14M12 18c-3 2-5 0-4-3M12 18c3 2 5 0 4-3M9 7c0-3 6-3 6 0" fill="none" stroke="#fff" strokeWidth="2" />
        </svg>
      </div>
      <div className="ml-[13px] flex w-[24px] shrink-0 items-center justify-center">
        <svg viewBox="0 0 24 24" width="24" height="24">
          <rect width="24" height="24" rx="2" fill="#ef8a17" />
          <rect x="4" y="5" width="15" height="16" fill="#f7e7bb" transform="rotate(-8 12 12)" />
          <path d="M7 10h8M7 13h8M7 16h5" stroke="#887" />
          <path d="M13 15l8-12" stroke="#c83a20" strokeWidth="2" />
        </svg>
      </div>
      {/* system tray */}
      <div className="flex flex-1 items-center text-[12px] text-[#ddd]">
        <span className="ml-[99px] w-[33px] shrink-0">链接</span>
        <svg viewBox="0 0 12 7" width="12" height="7">
          <path d="M1 6l5-5 5 5" fill="none" stroke="#ddd" />
        </svg>
        <svg viewBox="0 0 16 14" width="16" height="14" className="ml-[11px]">
          <rect x="2" y="4" width="12" height="8" fill="#ddd" />
          <path d="M4 0v4M8 0v4" stroke="#ddd" />
        </svg>
        <svg viewBox="0 0 16 14" width="16" height="14" className="ml-[9px]">
          <path d="M2 13a12 12 0 0 1 12-12M5 13a9 9 0 0 1 9-9M8 13a6 6 0 0 1 6-6M11 13a3 3 0 0 1 3-3" fill="none" stroke="#ddd" />
        </svg>
        <svg viewBox="0 0 16 14" width="16" height="14" className="ml-[5px]">
          <path d="M1 5h3l4-4v12l-4-4H1zM11 4c2 2 2 4 0 6M13 2c3 3 3 7 0 10" fill="none" stroke="#ddd" />
        </svg>
        <svg viewBox="0 0 24 16" width="24" height="16" className="ml-[9px]">
          <rect x="0.500" y="0.500" width="23" height="15" fill="none" stroke="#ddd" />
          <path d="M3 4h18M3 7h18M6 11h12" stroke="#ddd" strokeDasharray="1.500 1" />
        </svg>
        <span className="ml-[9px] w-[14px] shrink-0 text-[13px] text-white">中</span>
        <div className="ml-[14px] flex h-[19px] w-[15px] shrink-0 -rotate-6 items-center justify-center rounded-[3px] bg-[#ef4b23] font-['Liberation_Sans'] text-[15px] font-bold text-white">S</div>
        <div className="ml-[12px] flex w-[70px] shrink-0 flex-col items-center gap-[5px] text-[13px]">
          <span className="leading-[13px]">10:18</span>
          <span className="leading-[13px]">2018/5/22</span>
        </div>
        <svg viewBox="0 0 16 16" width="16" height="16" className="ml-[14px]">
          <path d="M.5 1.500h15v11H10l-2 2.500-2-2.500H.5z" fill="none" stroke="#eee" />
        </svg>
      </div>
    </div>
  )
}

export default function App() {
  return (
    <div className="relative flex h-[768px] w-[1366px] flex-col overflow-hidden bg-[#f0f0f0] font-['Noto_Sans_CJK_SC',sans-serif] text-[12px] leading-none">
      {/* title bar */}
      <div className="flex h-[23px] shrink-0 items-center bg-white">
        <div className="ml-[3px] flex h-[15px] w-[15px] shrink-0 items-center justify-center rounded-[3px] bg-[#1178dc]">
          <svg viewBox="0 0 12 12" width="11" height="11">
            <path d="M1 6h10M6 1v9M6 10c-2 1-3 0-3-2M6 10c2 1 3 0 3-2" fill="none" stroke="#fff" strokeWidth="1.400" />
          </svg>
        </div>
        <span className="ml-[4px] flex-1 tracking-[0.31px] whitespace-nowrap text-[#111]">
          广联达BIM钢筋算量软件 GGJ2013 - [C:\Users\Administrator.PC-20141127NRHM\Desktop\白龙村-2018-02-02-19-24-35(2666版).GGJ12]
        </span>
        <div className="mr-[2px] flex h-full shrink-0">
          <div className="flex w-[46px] items-center justify-center">
            <div className="h-px w-[10px] bg-[#222]" />
          </div>
          <div className="flex w-[46px] items-center justify-center">
            <svg viewBox="0 0 10 10" width="10" height="10">
              <path d="M2.500 2.500V.5h7v7h-2M.5 2.500h7v7h-7z" fill="none" stroke="#222" />
            </svg>
          </div>
          <div className="flex w-[46px] items-center justify-center">
            <svg viewBox="0 0 11 11" width="11" height="11">
              <path d="M.5.500l10 10M10.500.500l-10 10" stroke="#222" />
            </svg>
          </div>
        </div>
      </div>

      {/* menu bar */}
      <div className="flex h-[29px] shrink-0 items-center pl-[7px] text-[#111]">
        {menu.map(([t, w]) => (
          <div key={t} className={`shrink-0 whitespace-nowrap ${w}`}>
            {t}
          </div>
        ))}
        <T w="w-[74px]" i="newdoc" t="新建变更" />
        <Caret className="w-[12px]" />
        <div className="flex w-[64px] shrink-0 items-center">
          <svg viewBox="0 0 16 16" width="16" height="16">
            <path d="M2 8a6 6 0 0 1 12 0c0 4-2 7-6 7s-6-3-6-7z" fill="#2f9be8" />
            <circle cx="6" cy="7" r="1.300" fill="#fff" />
            <circle cx="10" cy="7" r="1.300" fill="#fff" />
          </svg>
          <span className="ml-[5px] whitespace-nowrap">广小二</span>
        </div>
        <div className="flex h-[27px] w-[188px] shrink-0 items-center bg-[#f6f6f6] pl-[33px] text-[#0f6b78]">栏板如何调换起始跨?</div>
        <div className="ml-[4px] flex w-[104px] shrink-0 items-center">
          <svg viewBox="0 0 16 16" width="16" height="16">
            <rect width="16" height="16" rx="2" fill="#4a90d0" />
            <circle cx="8" cy="6" r="3" fill="#fff" />
            <path d="M3 13c1-3 9-3 10 0z" fill="#fff" />
          </svg>
          <span className="ml-[5px] font-['Liberation_Sans'] text-[13px]">13907298339</span>
        </div>
        <Caret className="w-[15px]" />
        <span className="w-[52px] shrink-0 whitespace-nowrap">造价豆:0</span>
        <svg viewBox="0 0 16 18" width="16" height="18" className="ml-[1px] shrink-0">
          <path d="M8 1c3 0 4 3 4 6s1 5 3 6H1c2-1 3-3 3-6s1-6 4-6zM6 15h4c0 3-4 3-4 0z" fill="#2f8fe0" />
        </svg>
        <Chevrons className="-mt-[8px] ml-[37px]" />
      </div>

      {/* standard toolbar */}
      <div className="flex h-[31px] shrink-0 items-center">
        <div className="flex h-[27px] w-[150px] shrink-0 items-center bg-[#f7f7f7] pl-[5px]">
          <Ic n="doc" />
          <Ic n="open" className="ml-[7px]" />
          <Caret className="ml-[1px] w-[11px]" />
          <Ic n="save" className="ml-[7px]" />
          <div className="ml-[7px] h-[20px] w-px bg-[#c4c4c4]" />
          <Ic n="undo" className="ml-[4px]" />
          <Caret className="ml-[7px] w-[27px]" />
          <Chevrons className="-mt-[8px]" />
        </div>
        <div className="ml-[2px] flex h-[27px] w-[551px] shrink-0 items-center bg-[#f7f7f7] pl-[5px]">
          <T w="w-[50px]" i="define" t="定义" />
          <T w="w-[76px]" i="sigma" t="汇总计算" />
          <T w="w-[64px]" i="cloud" t="云检查" />
          <T gray w="w-[74px]" i="flat" t="平齐板顶" />
          <T w="w-[74px]" i="binoc" t="查找图元" />
          <T w="w-[87px]" i="glasses" t="查看钢筋量" />
          <T gray w="w-[110px]" i="batch" t="批量选择" />
          <Chevrons className="-mt-[8px]" />
        </div>
        <div className="ml-[2px] flex h-[27px] flex-1 items-center bg-[#f7f7f7] pl-[3px]">
          <T w="w-[49px]" i="cube" t="三维" />
          <Caret className="w-[14px]" />
          <T w="w-[51px]" i="cubeTop" t="俯视" />
          <Caret className="w-[9px]" />
          <T on w="w-[75px]" i="orbit" t="动态观察" />
          <div className="w-[2px] shrink-0" />
          <T gray w="w-[77px]" i="local3d" t="局部三维" />
          <Sep w="w-[4px]" />
          <T w="w-[53px]" i="full" t="全屏" />
          <T w="w-[50px]" i="zoom" t="缩放" />
          <Caret className="w-[12px]" />
          <T w="w-[51px]" i="pan" t="平移" />
          <Caret className="w-[11px]" />
          <T w="w-[71px]" i="rot" t="屏幕旋转" />
          <Caret className="w-[13px]" />
          <Sep w="w-[7px]" />
          <T w="w-[97px]" i="floors" t="选择楼层" />
          <Chevrons className="-mt-[8px]" />
        </div>
      </div>

      {/* main area */}
      <div className="mt-px flex h-[623px] shrink-0">
        <Sidebar />
        <Workspace />
      </div>

      <div className="h-px shrink-0" />
      <StatusBar />
      <Taskbar />

      {/* floating input method bar and score badge */}
      <div className="absolute top-0 left-[838px] flex h-[27px] items-center">
        <div className="z-10 flex h-[24px] w-[24px] -rotate-12 items-center justify-center rounded-[4px] bg-[#ef4b23] font-['Liberation_Sans'] text-[22px] font-bold text-white">S</div>
        <div className="-ml-[1px] flex h-[23px] w-[181px] items-center border border-[#a9c6e0] bg-[#f5f8fb] pl-[9px] text-[14px] font-bold text-[#1a78c2]">
          <span>中</span>
          <span className="ml-[8px] w-[15px] font-['Liberation_Sans']">°,</span>
          <svg viewBox="0 0 16 16" width="16" height="16" className="ml-[2px]">
            <circle cx="8" cy="8" r="7" fill="none" stroke="#1a78c2" strokeWidth="1.500" />
            <path d="M5 5v2M11 5v2M4.500 10c1.500 2 5.500 2 7 0" fill="none" stroke="#1a78c2" strokeWidth="1.300" />
          </svg>
          <svg viewBox="0 0 12 16" width="12" height="16" className="ml-[9px]">
            <rect x="3" y="0" width="6" height="10" rx="3" fill="#1a78c2" />
            <path d="M1 7a5 5 0 0 0 10 0M6 12v3M3 15.500h6" fill="none" stroke="#1a78c2" />
          </svg>
          <svg viewBox="0 0 16 13" width="16" height="13" className="ml-[7px]">
            <rect width="16" height="13" rx="1" fill="#1a78c2" />
            <path d="M2 3h12M2 6h12M4 10h8" stroke="#fff" strokeDasharray="1.500 1" />
          </svg>
          <svg viewBox="0 0 16 16" width="16" height="16" className="ml-[8px]">
            <circle cx="6" cy="4" r="3" fill="#a9bccd" />
            <path d="M1 15c0-8 10-8 10 0z" fill="#a9bccd" />
            <rect x="8" y="9" width="7" height="5" fill="#e6edf3" stroke="#a9bccd" />
          </svg>
          <svg viewBox="0 0 16 16" width="16" height="16" className="ml-[4px]">
            <path d="M5 1L1 4l2 3 2-1v9h6V6l2 1 2-3-4-3H9a1 1 0 0 1-2 0z" fill="#1a78c2" />
          </svg>
          <svg viewBox="0 0 16 16" width="16" height="16" className="ml-[6px]">
            <path d="M2 14l7-7a4 4 0 0 1 5-5l-2.500 2.500 1.500 1.500L15 4a4 4 0 0 1-5 5l-6 7z" fill="#1a78c2" />
          </svg>
        </div>
      </div>
      <div className="absolute top-[-32px] left-[1090px] flex h-[50px] w-[48px] items-end justify-center rounded-full border-2 border-[#cfd3cf] bg-[#3fb54a] pb-[3px] font-['Liberation_Sans'] text-[11px] font-bold text-white shadow-[0_2px_3px_#888]">
        67
      </div>

      {/* running app markers */}
      <div className="absolute bottom-0 left-[748px] h-[2px] w-[39px] bg-[#76b9ed]" />
      <div className="absolute bottom-0 left-[797px] h-[2px] w-[40px] bg-[#76b9ed]" />
      <div className="absolute bottom-0 left-[842px] h-[2px] w-[48px] bg-[#76b9ed]" />
      <div className="absolute bottom-0 left-[895px] h-[2px] w-[40px] bg-[#76b9ed]" />
    </div>
  )
}
